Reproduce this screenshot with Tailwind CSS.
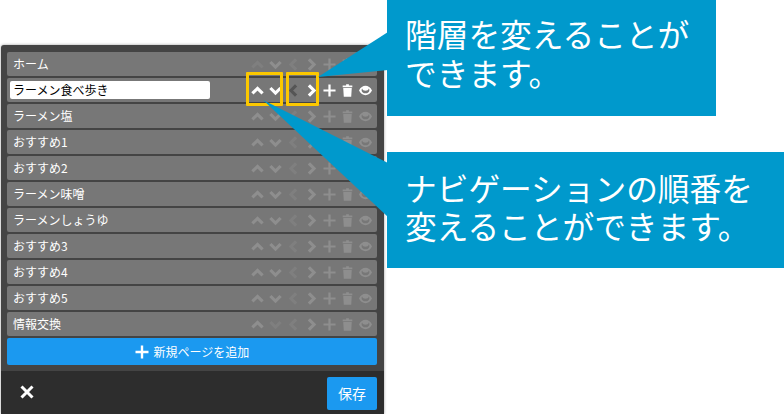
<!DOCTYPE html>
<html lang="ja">
<head>
  <meta charset="UTF-8" />
  <title>ナビゲーション編集</title>
  <script src="https://cdn.jsdelivr.net/npm/@tailwindcss/browser@4"></script>
</head>
<body class="bg-white font-['Noto_Sans_CJK_JP','Noto_Sans',sans-serif]">
  <svg class="hidden">
    <symbol id="up" viewBox="0 0 14 14"><path d="M1.500 10.200 7 4.700l5.500 5.500" fill="none" stroke="currentColor" stroke-width="3.400"/></symbol>
    <symbol id="down" viewBox="0 0 14 14"><path d="M1.500 4.300 7 9.800l5.500-5.500" fill="none" stroke="currentColor" stroke-width="3.400"/></symbol>
    <symbol id="left" viewBox="0 0 14 14"><path d="M9.800 1.500 4.300 7l5.500 5.500" fill="none" stroke="currentColor" stroke-width="3.400"/></symbol>
    <symbol id="right" viewBox="0 0 14 14"><path d="M4.200 1.500 9.700 7l-5.500 5.500" fill="none" stroke="currentColor" stroke-width="3.400"/></symbol>
    <symbol id="plus" viewBox="0 0 14 14"><path d="M7 .5v13M.5 7h13" fill="none" stroke="currentColor" stroke-width="2.400"/></symbol>
    <symbol id="trash" viewBox="0 0 14 14"><path d="M5.500 .3h3v1.200h3.700v2H1.800v-2h3.700zM2.400 4.300h9.200l-.6 9.400H3z" fill="currentColor"/></symbol>
    <symbol id="eye" viewBox="0 0 14 14"><path fill-rule="evenodd" d="M0 7c1.700-3.400 4.200-5 7-5s5.300 1.600 7 5c-1.700 3.400-4.200 5-7 5S1.700 10.400 0 7zm2.800-.4C2.800 8.600 4.700 10 7 10s4.200-1.400 4.200-3.400c0-.6-.2-1.200-.6-1.700C10.200 6.500 8.800 7.300 7 7.300S3.800 6.500 3.400 4.900c-.4.500-.6 1.100-.6 1.700z" fill="currentColor"/></symbol>
  </svg>

  <div class="relative h-[414px] w-[784px] overflow-hidden">
    <!-- Panel -->
    <div class="ml-px mt-[45px] flex h-[369px] w-[383px] flex-col rounded-t-[3px] bg-[#444444] shadow-[0_0_3px_rgba(0,0,0,0.4)]">
      <div id="rows" class="flex flex-col gap-[2px] pl-[6px] pr-[7px] pt-[7px]"></div>
      <button class="ml-[6px] mt-[2px] flex h-[27px] w-[370px] items-center justify-center gap-[5px] rounded-[2px] bg-[#1b99f0] text-[12px] text-white">
        <svg class="h-[14px] w-[14px]"><use href="#plus"/></svg>新規ページを追加
      </button>
      <div class="mt-[6px] flex h-[43px] flex-1 items-start justify-between bg-[#2d2d2d] pl-[19px] pr-[7px] pt-[6px]">
        <svg class="mt-[8px] h-[14px] w-[14px] text-white" viewBox="0 0 14 14"><path d="M1.500 1.500l11 11M12.500 1.500l-11 11" fill="none" stroke="currentColor" stroke-width="3"/></svg>
        <button class="h-[33px] w-[50px] rounded-[2px] bg-[#1b99f0] text-[14px] text-white">保存</button>
      </div>
    </div>

    <!-- Highlight boxes -->
    <div class="absolute left-[246px] top-[72px] h-[34px] w-[37px] rounded-[1px] border-[3px] border-[#fcc800]"></div>
    <div class="absolute left-[286px] top-[72px] h-[34px] w-[33px] rounded-[1px] border-[3px] border-[#fcc800]"></div>

    <!-- Callouts -->
    <svg class="absolute left-0 top-0 h-[414px] w-[784px] text-[#0099cc]">
      <path d="M318 77 388 32V70z" fill="currentColor"/>
      <path d="M263 100 388 163V217z" fill="currentColor"/>
    </svg>
    <div class="absolute left-[387px] top-0 h-[116px] w-[329px] bg-[#0099cc] pl-[18px] pt-[14px] text-[31.700px] leading-[39px] text-white">階層を変えることが<br />できます。</div>
    <div class="absolute left-[387px] top-[152px] h-[116px] w-[397px] bg-[#0099cc] pl-[18px] pt-[16px] text-[31.700px] leading-[38px] text-white">ナビゲーションの順番を<br />変えることができます。</div>
  </div>

  <script>
    const names = ['ホーム', 'ラーメン食べ歩き', 'ラーメン塩', 'おすすめ1', 'おすすめ2', 'ラーメン味噌', 'ラーメンしょうゆ', 'おすすめ3', 'おすすめ4', 'おすすめ5', '情報交換'];
    const icons = ['up', 'down', 'left', 'right', 'plus', 'trash', 'eye'];
    const last = names.length - 1;

    function iconCell(id, cls) {
      return `<span class="flex h-[18px] w-[18px] items-center justify-center ${cls}"><svg class="h-[13px] w-[13px]"><use href="#${id}"/></svg></span>`;
    }

    document.getElementById('rows').innerHTML = names.map((name, i) => {
      const active = i === 1;
      const cells = icons.map(id => {
        // left is off on every row, up on the first row and down on the last
        const off = id === 'left' || (id === 'up' && i === 0) || (id === 'down' && i === last);
        if (active) return iconCell(id, off ? 'text-[#555555]' : 'text-white');
        return iconCell(id, off ? 'text-[#7f7f7f]' : 'text-[#8e8e8e]');
      }).join('');
      const label = active
        ? `<input value="${name}" class="ml-[3px] h-[18px] w-[200px] rounded-[2px] bg-white px-[3px] text-[12px] text-black outline-none" />`
        : `<span class="pl-[6px] text-[12px] text-white">${name}</span>`;
      return `<div class="flex h-[24px] items-center justify-between rounded-[2px] bg-[#777777] pr-[3px]">${label}<div class="flex">${cells}</div></div>`;
    }).join('');
  </script>
</body>
</html>
